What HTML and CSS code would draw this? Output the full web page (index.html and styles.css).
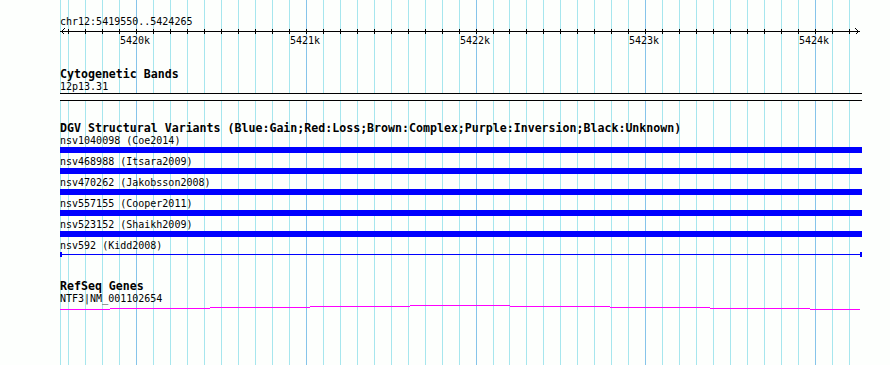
FILE: index.html
```html
<!DOCTYPE html>
<html lang="en">
<head>
    <meta charset="UTF-8">
    <title>chr12:5419550..5424265</title>
    <link rel="stylesheet" href="styles.css">
</head>
<body>
    <div class="panel">
        <!-- Grid lines every 100 bp, darker every 1 kb -->
        <svg class="grid" width="890" height="365" shape-rendering="crispEdges">
            <path class="minor" d="M60.5 0V365M68.5 0V365M85.5 0V365M102.5 0V365M119.5 0V365M153.5 0V365M170.5 0V365M187.5 0V365M204.5 0V365M221.5 0V365M238.5 0V365M255.5 0V365M272.5 0V365M289.5 0V365M323.5 0V365M340.5 0V365M357.5 0V365M374.5 0V365M391.5 0V365M408.5 0V365M425.5 0V365M442.5 0V365M459.5 0V365M493.5 0V365M509.5 0V365M526.5 0V365M543.5 0V365M560.5 0V365M577.5 0V365M594.5 0V365M611.5 0V365M628.5 0V365M662.5 0V365M679.5 0V365M696.5 0V365M713.5 0V365M730.5 0V365M747.5 0V365M764.5 0V365M781.5 0V365M798.5 0V365M832.5 0V365M849.5 0V365"/>
            <path class="major" d="M136.5 0V365M306.5 0V365M476.5 0V365M645.5 0V365M815.5 0V365"/>
        </svg>

        <section class="ruler">
            <div class="label">chr12:5419550..5424265</div>
            <svg class="scale" width="890" height="20" shape-rendering="crispEdges">
                <rect class="ink" x="60" y="3" width="800" height="1"/>
                <polyline class="arrow" points="64.5,0.5 61.5,3.5 64.5,6.5"/>
                <polyline class="arrow" points="855.5,0.5 858.5,3.5 855.5,6.5"/>
                <path class="ticks" d="M68.5 1V6M85.5 1V6M102.5 1V6M119.5 1V6M136.5 1V6M153.5 1V6M170.5 1V6M187.5 1V6M204.5 1V6M221.5 1V6M238.5 1V6M255.5 1V6M272.5 1V6M289.5 1V6M306.5 1V6M323.5 1V6M340.5 1V6M357.5 1V6M374.5 1V6M391.5 1V6M408.5 1V6M425.5 1V6M442.5 1V6M459.5 1V6M476.5 1V6M493.5 1V6M509.5 1V6M526.5 1V6M543.5 1V6M560.5 1V6M577.5 1V6M594.5 1V6M611.5 1V6M628.5 1V6M645.5 1V6M662.5 1V6M679.5 1V6M696.5 1V6M713.5 1V6M730.5 1V6M747.5 1V6M764.5 1V6M781.5 1V6M798.5 1V6M815.5 1V6M832.5 1V6M849.5 1V6"/>
                <text class="tick-label" x="135" y="16">5420k</text>
                <text class="tick-label" x="305" y="16">5421k</text>
                <text class="tick-label" x="475" y="16">5422k</text>
                <text class="tick-label" x="644" y="16">5423k</text>
                <text class="tick-label" x="814" y="16">5424k</text>
            </svg>
        </section>

        <section class="track cyto">
            <h2 class="track-title">Cytogenetic Bands</h2>
            <div class="label">12p13.31</div>
            <svg class="glyph" width="890" height="8" shape-rendering="crispEdges">
                <rect class="band" x="60" y="1" width="802" height="6"/>
                <rect class="ink" x="60" y="0" width="802" height="1"/>
                <rect class="ink" x="60" y="7" width="802" height="1"/>
            </svg>
        </section>

        <section class="track dgv">
            <h2 class="track-title">DGV Structural Variants (Blue:Gain;Red:Loss;Brown:Complex;Purple:Inversion;Black:Unknown)</h2>

            <div class="label">nsv1040098 (Coe2014)</div>
            <svg class="glyph" width="890" height="8" shape-rendering="crispEdges">
                <rect class="gain" x="60" y="0" width="802" height="6"/>
            </svg>

            <div class="label">nsv468988 (Itsara2009)</div>
            <svg class="glyph" width="890" height="8" shape-rendering="crispEdges">
                <rect class="gain" x="60" y="0" width="802" height="6"/>
            </svg>

            <div class="label">nsv470262 (Jakobsson2008)</div>
            <svg class="glyph" width="890" height="8" shape-rendering="crispEdges">
                <rect class="gain" x="60" y="0" width="802" height="6"/>
            </svg>

            <div class="label">nsv557155 (Cooper2011)</div>
            <svg class="glyph" width="890" height="8" shape-rendering="crispEdges">
                <rect class="gain" x="60" y="0" width="802" height="6"/>
            </svg>

            <div class="label">nsv523152 (Shaikh2009)</div>
            <svg class="glyph" width="890" height="8" shape-rendering="crispEdges">
                <rect class="gain" x="60" y="0" width="802" height="6"/>
            </svg>

            <div class="label">nsv592 (Kidd2008)</div>
            <svg class="glyph" width="890" height="8" shape-rendering="crispEdges">
                <rect class="gain" x="60" y="2" width="802" height="1"/>
                <rect class="gain" x="60" y="0" width="2" height="5"/>
                <rect class="gain" x="860" y="0" width="2" height="5"/>
            </svg>
        </section>

        <section class="track refseq">
            <h2 class="track-title">RefSeq Genes</h2>
            <div class="label">NTF3|NM_001102654</div>
            <svg class="glyph" width="890" height="6" shape-rendering="crispEdges">
                <rect class="gene" x="60" y="4" width="50" height="1"/>
                <rect class="gene" x="110" y="3" width="100" height="1"/>
                <rect class="gene" x="210" y="2" width="100" height="1"/>
                <rect class="gene" x="310" y="1" width="100" height="1"/>
                <rect class="gene" x="410" y="0" width="100" height="1"/>
                <rect class="gene" x="510" y="1" width="100" height="1"/>
                <rect class="gene" x="610" y="2" width="100" height="1"/>
                <rect class="gene" x="710" y="3" width="100" height="1"/>
                <rect class="gene" x="810" y="4" width="50" height="1"/>
            </svg>
        </section>
    </div>
</body>
</html>
```

FILE: styles.css
```css
body {
    margin: 0;
    background: #fdfffd;
    font-family: 'DejaVu Sans Mono', 'Liberation Mono', monospace;
    color: #000;
}
.panel {
    position: relative;
    width: 890px;
    height: 365px;
    overflow: hidden;
}
.grid {
    position: absolute; /* sits behind every track */
    top: 0;
    left: 0;
}
.grid .minor {
    stroke: #a6e6ee;
    stroke-width: 1;
}
.grid .major {
    stroke: #86c4ea;
    stroke-width: 1;
}
.ruler, .track {
    position: relative;
}
.ruler {
    padding-top: 15px;
}
svg {
    display: block;
}
.label {
    margin-left: 60px;
    font-size: 10px;
    line-height: 13px;
    white-space: pre;
}
.track-title {
    margin: 0 0 0 60px;
    font-size: 11.6px;
    font-weight: bold;
    line-height: 12px;
    white-space: pre;
}
.cyto {
    margin-top: 20px;
}
.dgv {
    margin-top: 21px;
}
.refseq {
    margin-top: 20px;
}
.ink {
    fill: #000;
}
.arrow, .ticks {
    fill: none;
    stroke: #000;
    stroke-width: 1;
}
.tick-label {
    font-family: 'DejaVu Sans Mono', monospace;
    font-size: 10px;
    text-anchor: middle;
    fill: #000;
}
.band {
    fill: #fdfffd;
}
.gain {
    fill: #0000ff;
}
.gene {
    fill: #ff00ff;
}
```
